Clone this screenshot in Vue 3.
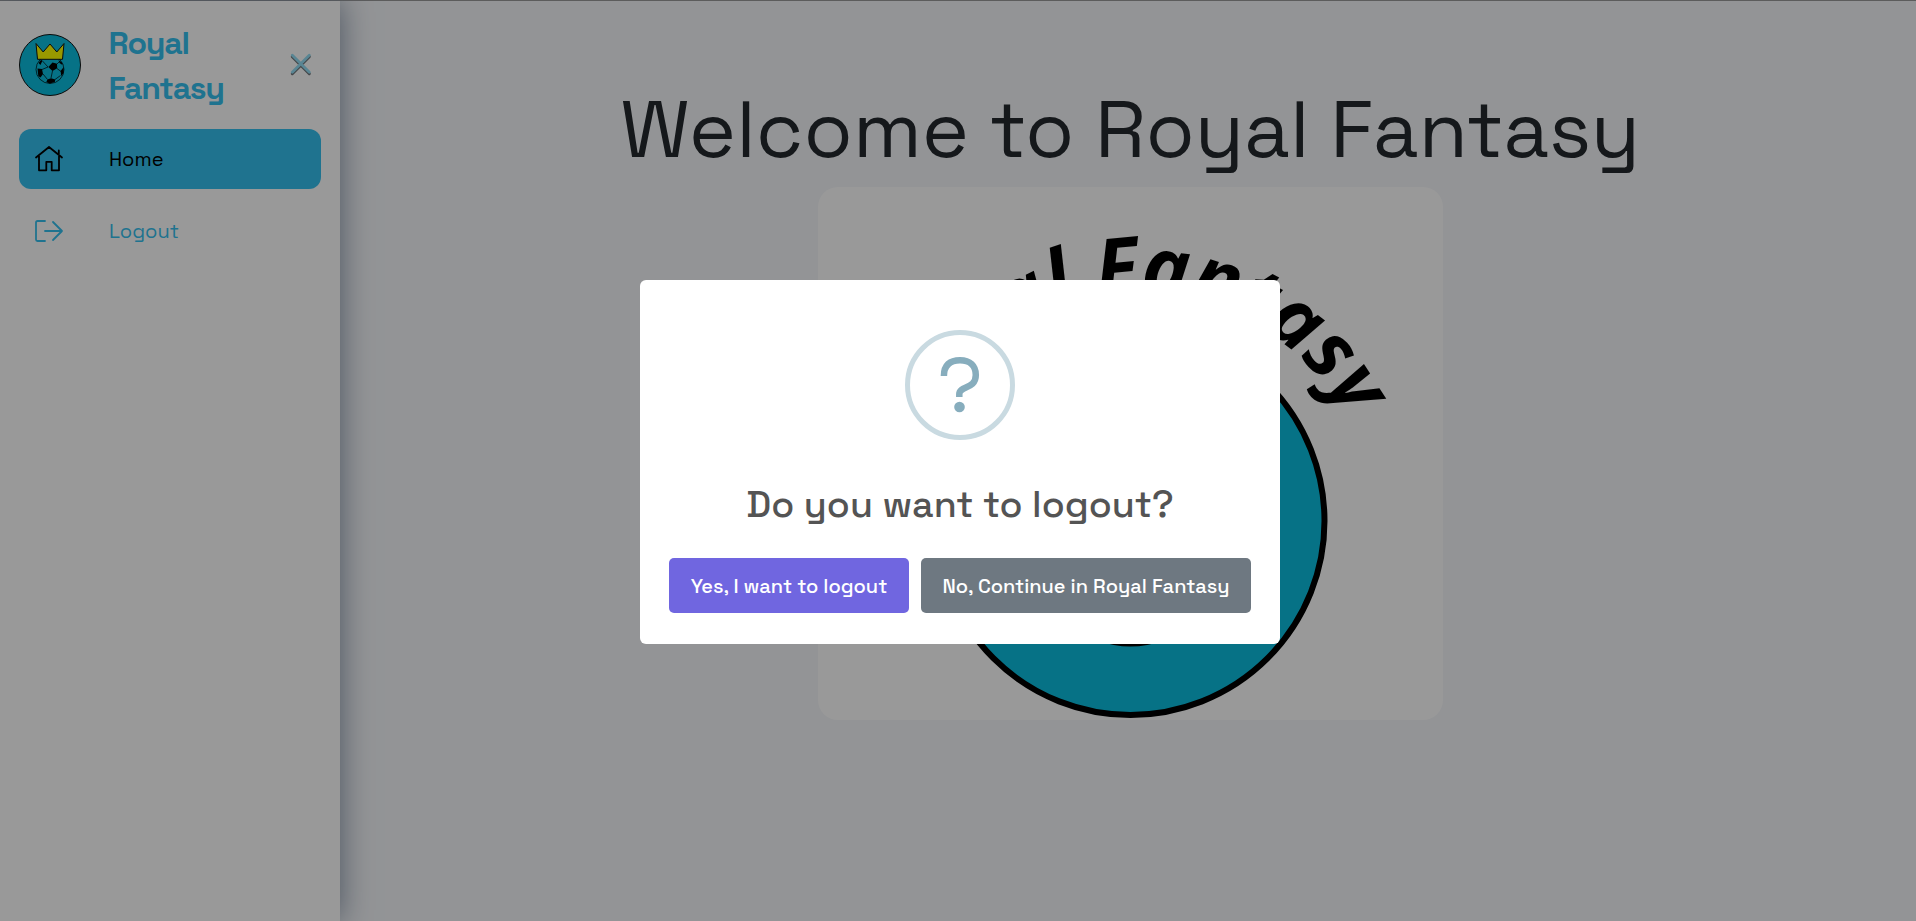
<script setup>
const navItems = [
  { label: 'Home', icon: 'home', active: true },
  { label: 'Logout', icon: 'logout', active: false },
]
</script>

<template>
  <div class="page">
    <aside class="sidebar">
      <header class="brand">
        <svg class="brand-logo" viewBox="0 0 62 62">
          <circle cx="31" cy="31" r="30.5" fill="#0abfdf" stroke="#111" stroke-width="1" />
          <circle cx="31" cy="35.500" r="14" fill="#0abfdf" stroke="#000" stroke-width="0.7" />
          <path d="M33.500 28.500l4.500 1.200.2 4.600-4.700 2.700-4.200-4z M18.500 34.500l4.500.5 1 5-2.500 3.500-2.200-1.500z M28.500 45.500l3.500-1.300 4.300 1.300-.5 2.500-5 1.500-3.500-1.500z M44.700 33v6l-2.500 3-.6-5z M19.500 29l2.500-3 1.500.5-2 4.500z M39.500 26l3.500 2.500.5 2.500-3-2z" fill="#000" />
          <path d="M23.500 27l5.500 6-6 2.500 M33.500 37l-1.500 7 M38 34.500l4 3 M24 40l4.500 5.500 M41.500 41.500l-5.500 4 M38 30l2-2" stroke="#000" stroke-width="0.7" fill="none" />
          <path d="M17 9.500l7.200 8.500 6.800-8 6.800 8L45 9.500l-1.500 15.800h-25z" fill="#ff0" stroke="#111" stroke-width="1" />
        </svg>
        <h2 class="brand-name"><span>Royal</span><span>Fantasy</span></h2>
        <svg class="close" viewBox="0 0 22 23" fill="none" stroke-linecap="round">
          <path d="M2.300 3.700l17 17M19.300 3.700l-17 17" stroke="#70757a" stroke-width="3" />
          <path d="M2.300 2.300l17 17M19.300 2.300l-17 17" stroke="#94def5" stroke-width="2.800" />
        </svg>
      </header>
      <nav class="nav">
        <a v-for="item in navItems" :key="item.label" class="nav-item" :class="[item.icon, { active: item.active }]">
          <svg v-if="item.icon === 'home'" class="nav-icon" viewBox="0 0 30 30" fill="none" stroke="currentColor" stroke-width="1.800" stroke-linecap="round" stroke-linejoin="round">
            <path d="M2 13.500L15 3l13 10.500M5 12v14.300h7.300v-8.500h5.400v8.500H25V12M24.800 10V6.500" />
          </svg>
          <svg v-else class="nav-icon" viewBox="0 0 30 30" fill="none" stroke="currentColor" stroke-width="1.800" stroke-linecap="round" stroke-linejoin="round">
            <path d="M11 5H3.500Q2 5 2 6.500v17Q2 25 3.500 25H11M11 15h17M19 6l9 9-9 9" />
          </svg>
          <span class="nav-label">{{ item.label }}</span>
        </a>
      </nav>
    </aside>

    <main class="content">
      <h1 class="welcome">Welcome to Royal Fantasy</h1>
      <svg class="hero" viewBox="0 0 625 533">
        <path id="arc" d="M89 340a233 233 0 0 1 466 0" fill="none" />
        <text class="arc-text"><textPath href="#arc" startOffset="48.900%" text-anchor="middle">Royal Fantasy</textPath></text>
        <circle cx="312.500" cy="334" r="194" fill="#0abfdf" stroke="#000" stroke-width="6" />
        <circle cx="312.500" cy="370" r="88" fill="#0abfdf" stroke="#000" stroke-width="3" />
        <path d="M282 425l60 0 22 22-52 12-50-12z" fill="#000" />
        <path d="M224 200l45 52 43-50 43 50 45-52-10 98H234z" fill="#ff0" stroke="#000" stroke-width="6" />
      </svg>
    </main>

    <div class="overlay">
      <section class="dialog">
        <div class="question"><svg viewBox="0 0 110 110">
          <path d="M38.900 46C38.900 35 45 30.200 55 30.200C65 30.200 70.800 36 70.800 45C70.800 59.500 54.300 55.500 54.300 64V67" fill="none" stroke="#87adbd" stroke-width="6.500" />
          <circle cx="54.500" cy="77" r="5.300" fill="#87adbd" />
        </svg></div>
        <h2 class="dialog-title">Do you want to logout?</h2>
        <div class="actions">
          <button class="btn confirm">Yes, I want to logout</button>
          <button class="btn cancel">No, Continue in Royal Fantasy</button>
        </div>
      </section>
    </div>
  </div>
</template>

<style>
body { margin: 0; }
</style>

<style scoped>
* { box-sizing: border-box; }
.page {
  display: flex;
  width: 1916px;
  height: 921px;
  padding-top: 1px;
  overflow: hidden;
  background: linear-gradient(#999 1px, #f5f7fa 1px);
  font-family: "Space Grotesk", Inter, "Liberation Sans", sans-serif;
}
.sidebar {
  flex: 0 0 340px;
  padding: 18px 19px;
  background: #fff;
  box-shadow: 0 0 30px #7c8ba0;
  color: #35c0ee;
}
.brand { display: flex; align-items: center; height: 92px; }
.brand-logo { width: 62px; height: 62px; flex: none; }
.brand-name {
  display: flex;
  flex-direction: column;
  flex: 1;
  margin: 1px 0 0 27.500px;
  font-size: 32px;
  line-height: 45px;
  font-weight: 600;
  letter-spacing: -1.250px;
}
.close { width: 22px; height: 23px; margin: 0 9px 2px 0; }
.nav { display: flex; flex-direction: column; gap: 12px; margin-top: 18px; }
.nav-item {
  display: flex;
  align-items: center;
  height: 60px;
  padding-left: 15px;
  border-radius: 12px;
  font-size: 20px;
}
.nav-item.active { background: #35c0ee; color: #000; }
.nav-icon { width: 30px; height: 30px; }
.nav-label { margin-left: 45px; }
.content { flex: 1; display: flex; flex-direction: column; align-items: center; padding: 78px 0 0; }
.welcome {
  margin: 0 0 0 4px;
  height: 108px;
  line-height: 100px;
  font-size: 80px;
  font-weight: 400;
  color: #24282d;
  white-space: nowrap;
}
.hero { width: 625px; height: 533px; border-radius: 20px; background: #fff; margin-left: 5px; }
.arc-text { font: italic 700 79.500px "Open Sans", sans-serif; fill: #000; }
.overlay {
  position: absolute;
  inset: 0;
  width: 1916px;
  height: 921px;
  display: flex;
  justify-content: center;
  align-items: center;
  padding: 3px 0 0 4px;
  background: rgba(0, 0, 0, 0.4);
}
.dialog {
  width: 640px;
  height: 364px;
  padding-top: 50px;
  border-radius: 6px;
  background: #fff;
  display: flex;
  flex-direction: column;
  align-items: center;
}
.question { width: 110px; height: 110px; border: 5px solid #c9dae1; border-radius: 50%; }
.question svg { display: block; width: 110px; height: 110px; margin: -5px; }
.dialog-title {
  margin: 37px 0 0;
  height: 81px;
  line-height: 54px;
  font-size: 37.500px;
  font-weight: 500;
  color: #545454;
  white-space: nowrap;
}
.actions { display: flex; gap: 12px; }
.btn {
  height: 55px;
  padding: 1px 0 0;
  border: 0;
  border-radius: 5px;
  color: #fff;
  font: 500 20px "Space Grotesk", Inter, "Liberation Sans", sans-serif;
  white-space: nowrap;
}
.confirm { width: 240px; background: #7066e0; }
.cancel { width: 330px; background: #6e7881; }
</style>
